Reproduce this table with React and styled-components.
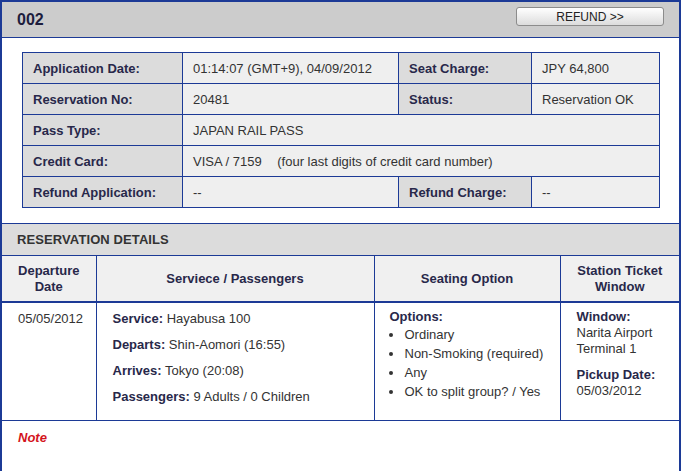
import React from 'react'
import styled, { createGlobalStyle } from 'styled-components'

const GlobalStyle = createGlobalStyle`
  html, body {
    margin: 0;
    padding: 0;
    background: #fff;
    font-family: "Liberation Sans", Arial, sans-serif;
  }
`

const BLUE = '#1c3a96'

export default function App() {
  const info = [
    [['Application Date:', '01:14:07 (GMT+9), 04/09/2012'], ['Seat Charge:', 'JPY 64,800']],
    [['Reservation No:', '20481'], ['Status:', 'Reservation OK']],
    [['Pass Type:', 'JAPAN RAIL PASS']],
    [['Credit Card:', <>VISA / 7159 <Hint>(four last digits of credit card number)</Hint></>]],
    [['Refund Application:', '--'], ['Refund Charge:', '--']],
  ]

  return (
    <>
      <GlobalStyle />
      <Frame>
        <TopBar>
          <OrderNo>002</OrderNo>
          <RefundButton>REFUND &gt;&gt;</RefundButton>
        </TopBar>

        <InfoWrap>
          <InfoTable>
            <colgroup>
              <col style={{ width: 160 }} />
              <col style={{ width: 216 }} />
              <col style={{ width: 133 }} />
              <col />
            </colgroup>
            <tbody>
              {info.map((row, i) => (
                <tr key={i}>
                  {row.map(([label, value], j) => (
                    <React.Fragment key={j}>
                      <LabelCell>{label}</LabelCell>
                      <ValueCell colSpan={row.length === 1 ? 3 : 1}>{value}</ValueCell>
                    </React.Fragment>
                  ))}
                </tr>
              ))}
            </tbody>
          </InfoTable>
        </InfoWrap>

        <SectionBar>RESERVATION DETAILS</SectionBar>

        <DetailTable>
          <colgroup>
            <col style={{ width: 94 }} />
            <col style={{ width: 278 }} />
            <col style={{ width: 186 }} />
            <col />
          </colgroup>
          <thead>
            <tr>
              <HeadCell>Departure<br />Date</HeadCell>
              <HeadCell>Serviece / Passengers</HeadCell>
              <HeadCell>Seating Option</HeadCell>
              <HeadCell>Station Ticket<br />Window</HeadCell>
            </tr>
          </thead>
          <tbody>
            <tr>
              <BodyCell $pad="8px 0 0 16px">05/05/2012</BodyCell>
              <BodyCell $pad="3px 0 0 16px">
                <ServiceLine><b>Service:</b> Hayabusa 100</ServiceLine>
                <ServiceLine><b>Departs:</b> Shin-Aomori (16:55)</ServiceLine>
                <ServiceLine><b>Arrives:</b> Tokyo (20:08)</ServiceLine>
                <ServiceLine><b>Passengers:</b> 9 Adults / 0 Children</ServiceLine>
              </BodyCell>
              <BodyCell $pad="6px 0 0 15px">
                <Strong>Options:</Strong>
                <OptionList>
                  <li>Ordinary</li>
                  <li>Non-Smoking (required)</li>
                  <li>Any</li>
                  <li>OK to split group? / Yes</li>
                </OptionList>
              </BodyCell>
              <BodyCell $pad="6px 0 0 16px">
                <Strong>Window:</Strong>
                <Plain>Narita Airport<br />Terminal 1</Plain>
                <Strong $top={10}>Pickup Date:</Strong>
                <Plain>05/03/2012</Plain>
              </BodyCell>
            </tr>
          </tbody>
        </DetailTable>

        <NoteBlock>Note</NoteBlock>
      </Frame>
    </>
  )
}

const Frame = styled.div`
  width: 677px;
  min-height: 471px;
  border: 2px solid ${BLUE};
  border-bottom: none;
  box-sizing: content-box;
  color: #333;
  font-size: 13px;
`

const TopBar = styled.div`
  height: 35px;
  background: #cccccc;
  border-bottom: 1px solid ${BLUE};
  display: flex;
  align-items: center;
  justify-content: space-between;
  padding: 0 15px 0 15px;
`

const OrderNo = styled.div`
  font-size: 16px;
  font-weight: bold;
  color: #1d1d3d;
  padding-top: 1px;
`

const RefundButton = styled.button`
  width: 148px;
  height: 19px;
  margin-top: -6px;
  border: 1px solid #8c8c8c;
  border-radius: 3px;
  background: linear-gradient(#ffffff, #ececec 55%, #dcdcdc);
  font-family: "Liberation Sans", Arial, sans-serif;
  font-size: 12px;
  color: #222;
  padding: 0;
  cursor: pointer;
`

const InfoWrap = styled.div`
  padding: 14px 19px 15px 20px;
  border-bottom: 1px solid ${BLUE};
`

const InfoTable = styled.table`
  width: 100%;
  border-collapse: collapse;
  border: 1px solid ${BLUE};
  table-layout: fixed;
  td {
    height: 30px;
    border: 1px solid ${BLUE};
    padding: 0 10px;
    vertical-align: middle;
  }
`

const LabelCell = styled.td`
  background: #dcdcdc;
  font-weight: bold;
  color: #28284a;
`

const ValueCell = styled.td`
  background: #efefef;
  color: #333;
`

const Hint = styled.span`
  margin-left: 12px;
`

const SectionBar = styled.div`
  height: 31px;
  background: #dcdcdc;
  border-bottom: 1px solid ${BLUE};
  padding: 0 15px;
  display: flex;
  align-items: center;
  font-weight: bold;
  color: #333;
  letter-spacing: 0.1px;
`

const DetailTable = styled.table`
  width: 100%;
  border-collapse: collapse;
  table-layout: fixed;
  border-bottom: 1px solid ${BLUE};
`

const HeadCell = styled.th`
  height: 45px;
  background: #f0f0f0;
  color: #28284a;
  font-weight: bold;
  text-align: center;
  padding: 0;
  line-height: 16px;
  border-left: 1px solid ${BLUE};
  border-bottom: 2px solid ${BLUE};
  &:first-child { border-left: none; }
`

const BodyCell = styled.td`
  height: ${({ $pad }) => 117 - parseInt($pad, 10)}px;
  vertical-align: top;
  padding: ${({ $pad }) => $pad};
  border-left: 1px solid ${BLUE};
  &:first-child { border-left: none; }
`

const ServiceLine = styled.div`
  line-height: 26px;
  b { color: #28284a; }
`

const Strong = styled.div`
  font-weight: bold;
  color: #28284a;
  line-height: 16px;
  margin-top: ${({ $top }) => ($top || 0)}px;
`

const Plain = styled.div`
  line-height: 16px;
`

const OptionList = styled.ul`
  margin: 0;
  padding: 0 0 0 14px;
  li {
    line-height: 19px;
    padding-left: 1px;
  }
`

const NoteBlock = styled.div`
  padding: 9px 16px;
  color: #d4141c;
  font-weight: bold;
  font-style: italic;
  font-size: 13px;
`
